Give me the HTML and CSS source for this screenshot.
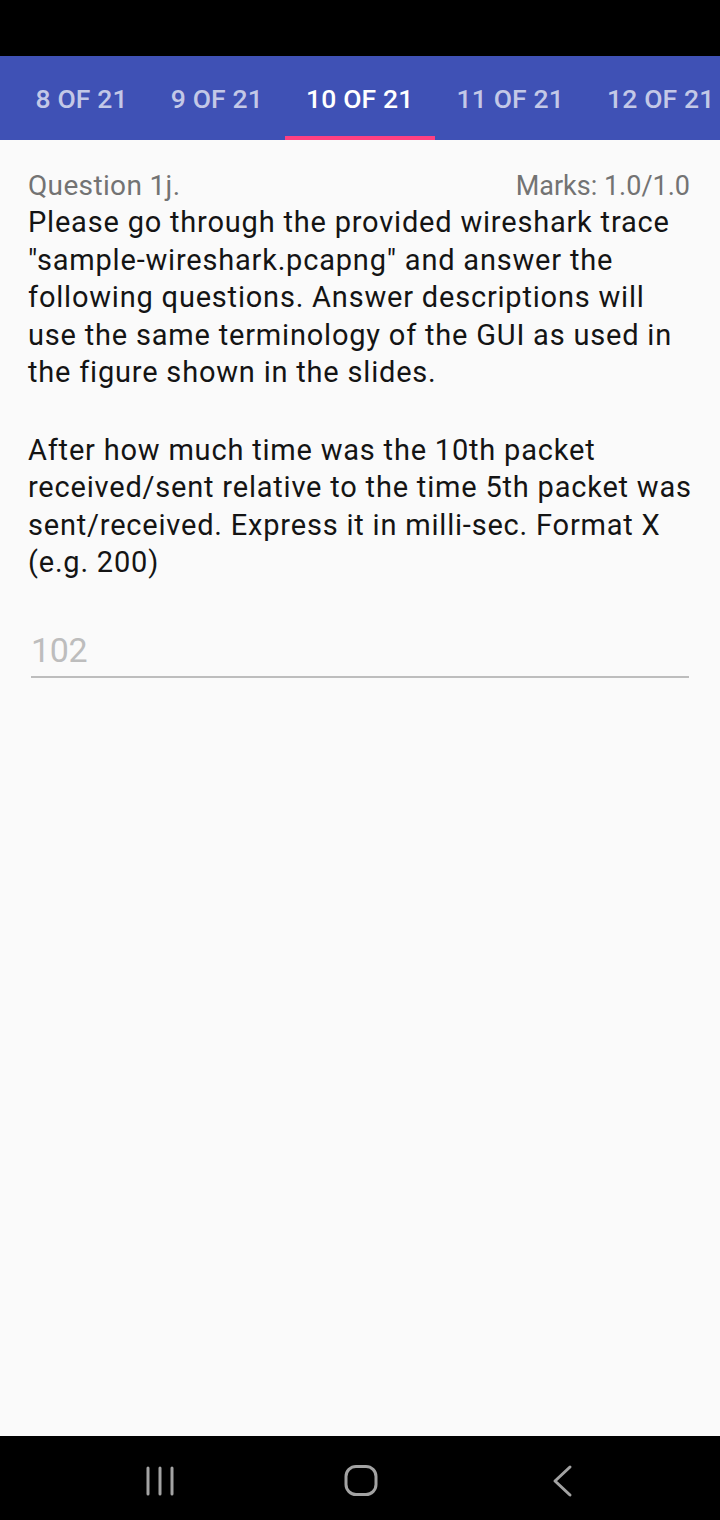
FILE: index.html
```html
<!DOCTYPE html>
<html>
<head>
<meta charset="utf-8">
<link rel="stylesheet" href="styles.css">
</head>
<body>
<div class="screen">
  <div class="status-bar"></div>
  <div class="tab-bar">
    <div class="tabs">
      <div class="tab">8 OF 21</div>
      <div class="tab">9 OF 21</div>
      <div class="tab active">10 OF 21</div>
      <div class="tab">11 OF 21</div>
      <div class="tab">12 OF 21</div>
    </div>
  </div>
  <main class="content">
    <div class="q-header">
      <span class="q-title">Question 1j.</span>
      <span class="q-marks">Marks: 1.0/1.0</span>
    </div>
    <p class="q-text">Please go through the provided wireshark trace "sample-wireshark.pcapng" and answer the following questions. Answer descriptions will use the same terminology of the GUI as used in the figure shown in the slides.</p>
    <p class="q-text q-gap">After how much time was the 10th packet received/sent relative to the time 5th packet was sent/received. Express it in milli-sec. Format X (e.g. 200)</p>
    <div class="answer">
      <span class="answer-value">102</span>
    </div>
  </main>
  <nav class="nav-bar">
    <svg class="nav-icon" width="40" height="40" viewBox="0 0 40 40">
      <g stroke="#a3a3a3" stroke-width="3" stroke-linecap="round" fill="none">
        <line x1="8" y1="7" x2="8" y2="33"/>
        <line x1="20" y1="7" x2="20" y2="33"/>
        <line x1="32" y1="7" x2="32" y2="33"/>
      </g>
    </svg>
    <svg class="nav-icon" width="40" height="40" viewBox="0 0 40 40">
      <rect x="5" y="5.5" width="30" height="28" rx="10" ry="10" stroke="#a3a3a3" stroke-width="3" fill="none"/>
    </svg>
    <svg class="nav-icon" width="40" height="40" viewBox="0 0 40 40">
      <polyline points="28,6 13,20 28,34" stroke="#a3a3a3" stroke-width="3" stroke-linecap="round" stroke-linejoin="round" fill="none"/>
    </svg>
  </nav>
</div>
</body>
</html>
```

FILE: styles.css
```css
* { box-sizing: border-box; }
html, body { margin: 0; padding: 0; }
body {
  width: 720px;
  height: 1520px;
  background: #fafafa;
  font-family: Roboto, "Noto Sans", sans-serif;
  overflow: hidden;
}
.screen {
  display: flex;
  flex-direction: column;
  height: 1520px;
}
.status-bar {
  height: 56px;
  background: #000;
  flex: none;
}
.tab-bar {
  height: 84px;
  background: #3f51b5;
  flex: none;
  overflow: hidden;
  padding-left: 14px;
}
.tabs {
  display: flex;
  height: 100%;
  white-space: nowrap;
}
.tab {
  flex: none;
  padding: 0 21.5px;
  height: 100%;
  display: flex;
  align-items: center;
  justify-content: center;
  font-size: 26.5px;
  font-weight: 500;
  letter-spacing: 0.15px;
  color: rgba(255, 255, 255, 0.7);
  border-bottom: 4px solid transparent;
  padding-top: 4px;
}
.tab.active {
  color: #fff;
  border-bottom-color: #ff4081;
}
.content {
  flex: 1;
  padding: 28px 28px 0 28px;
}
.q-header {
  display: flex;
  justify-content: space-between;
  align-items: baseline;
  color: #737373;
  line-height: 36px;
  height: 36px;
}
.q-title { font-size: 28px; letter-spacing: 0.35px; }
.q-marks { font-size: 27px; margin-right: 2px; }
.q-text {
  margin: 0;
  font-size: 29px;
  letter-spacing: 0.8px;
  line-height: 37.5px;
  color: #141414;
}
.q-gap { margin-top: 40px; }
.answer {
  margin: 48px 3px 0 3px;
  border-bottom: 2px solid #bdbdbd;
  height: 48px;
  display: flex;
  align-items: flex-end;
}
.answer-value {
  font-size: 34px;
  color: #bdbdbd;
  line-height: 40px;
  padding-bottom: 6px;
  letter-spacing: -0.3px;
}
.nav-bar {
  height: 84px;
  flex: none;
  background: #000;
  display: flex;
  align-items: center;
  justify-content: space-between;
  padding: 0 138px 0 140px;
}
.nav-icon { display: block; margin-top: 6px; }
```
